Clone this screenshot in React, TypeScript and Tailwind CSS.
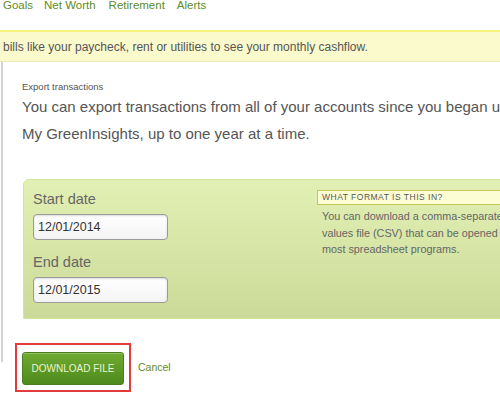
const font = "font-['Liberation_Sans',Arial,sans-serif]";

function DateField({ label, value, top }: { label: string; value: string; top: string }) {
  return (
    <div className={top}>
      <div className="text-[14.5px] leading-[18px] text-[#666]">{label}</div>
      <div className="mt-[6px] w-[135px] h-[26px] rounded-[4px] border border-[#9b9b9b] bg-gradient-to-b from-white to-[#f4f4f4] shadow-[inset_0_1px_2px_rgba(0,0,0,0.15)] flex items-center pl-[4px] text-[12.5px] text-[#333]">
        {value}
      </div>
    </div>
  );
}

export default function App() {
  return (
    <div className={`${font} w-[500px] h-[400px] overflow-hidden bg-white`}>
      <nav className="h-[30px] flex pl-[3px] text-[11.5px] leading-[13px] text-[#5e8c1f]">
        <span className="mt-[-1px]">Goals</span>
        <span className="mt-[-1px] ml-[11px]">Net Worth</span>
        <span className="mt-[-1px] ml-[13px]">Retirement</span>
        <span className="mt-[-1px] ml-[12px]">Alerts</span>
      </nav>

      <div className="h-[32px] border-t-2 border-t-[#f6f27a] border-b border-b-[#ecebb8] bg-[#fbfacd] flex items-center pl-[3px] text-[12px] text-[#555] whitespace-nowrap">
        bills like your paycheck, rent or utilities to see your monthly cashflow.
      </div>

      <div className="flex">
        <div className="ml-[1px] w-[2px] h-[300px] bg-[#d3d3d3] shrink-0" />
        <div className="pl-[19px]">
          <div className="mt-[19px] text-[9.5px] leading-[12px] text-[#555]">Export transactions</div>
          <div className="text-[15px] leading-[27px] text-[#555] whitespace-nowrap">
            You can export transactions from all of your accounts since you began using
            <br />
            My GreenInsights, up to one year at a time.
          </div>

          <div className="mt-[32px] ml-[1px] w-[600px] h-[140px] rounded-tl-[6px] border border-[#d3e49c] bg-gradient-to-b from-[#e3f0b5] to-[#cbda98] flex pl-[9px] pt-[10px]">
            <div className="w-[284px] shrink-0">
              <DateField label="Start date" value="12/01/2014" top="" />
              <DateField label="End date" value="12/01/2015" top="mt-[13px]" />
            </div>
            <div>
              <div className="w-[220px] h-[15px] border border-[#c3c75a] bg-[#fdfdd4] flex items-center pl-[4px] text-[8.5px] tracking-[0.5px] text-[#555]">
                WHAT FORMAT IS THIS IN?
              </div>
              <div className="mt-[3px] pl-[5px] text-[10.8px] leading-[16.5px] text-[#666] whitespace-nowrap">
                You can download a comma-separated
                <br />
                values file (CSV) that can be opened by
                <br />
                most spreadsheet programs.
              </div>
            </div>
          </div>

          <div className="mt-[24px] flex items-center">
            <div className="ml-[-7px] border-2 border-[#e33b3b] pl-[5px] pr-[5px] pt-[7px] pb-[5px]">
              <button className="w-[102px] h-[33px] rounded-[3px] border border-[#4a7d1c] bg-gradient-to-b from-[#6fab31] to-[#4d8a1c] shadow-[inset_0_1px_0_rgba(255,255,255,0.25)] text-[10px] text-[#e8f4d2]">
                DOWNLOAD FILE
              </button>
            </div>
            <span className="ml-[7px] text-[10.5px] text-[#5e8c1f]">Cancel</span>
          </div>
        </div>
      </div>
    </div>
  );
}
